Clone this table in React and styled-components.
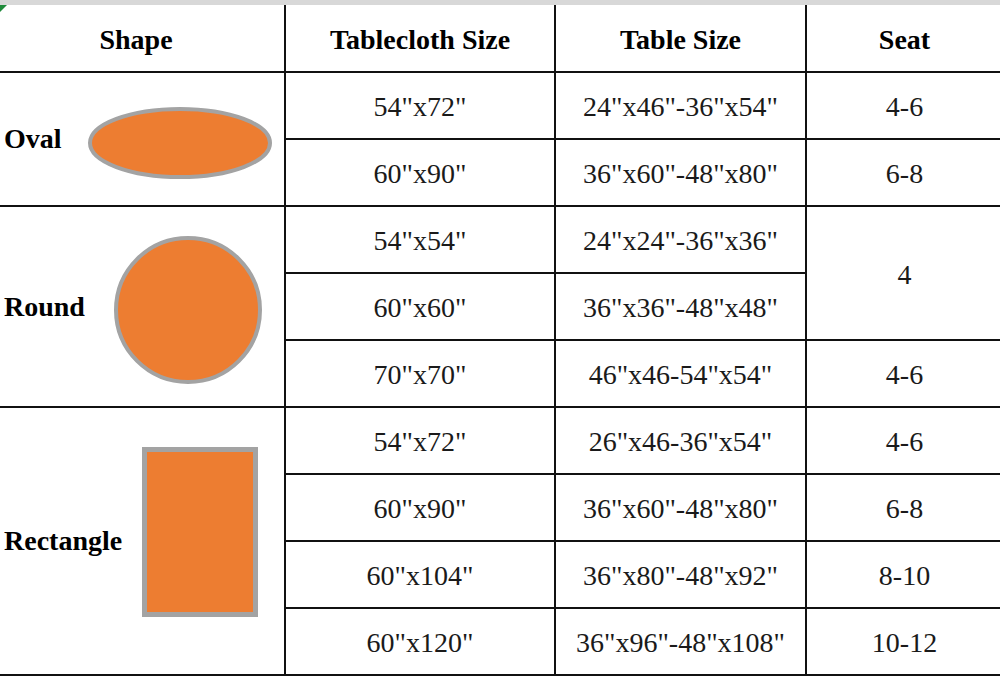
import React from 'react'
import styled, { createGlobalStyle } from 'styled-components'

const Global = createGlobalStyle`
    body {
        margin: 0;
        background: #fff;
    }
`

const Page = styled.div`
    position: relative;
    width: 1000px;
    height: 680px;
    overflow: hidden;
    background: #fff;
    font-family: "Liberation Serif", serif;
`

const Corner = styled.div`
    position: absolute;
    top: 5px;
    left: 0;
    width: 0;
    height: 0;
    border-top: 7px solid #1f8a3a;
    border-right: 7px solid transparent;
`

const Table = styled.table`
    width: 1002px;
    table-layout: fixed;
    border-collapse: collapse;
    border-top: 5px solid #d8d8d8;
`

const Head = styled.th`
    height: 63px;
    padding: 3px 0 0;
    font-family: "Liberation Serif", serif;
    font-size: 28px;
    font-weight: 700;
    color: #000;
    text-align: center;
    border-left: 2px solid #111;
    border-bottom: 2px solid #111;
    &:first-child {
        border-left: none;
        padding-right: 12px;
    }
`

const Cell = styled.td`
    height: 62px;
    padding: 3px 0 0;
    font-family: "Liberation Serif", serif;
    font-size: 28px;
    color: #1a1a1a;
    text-align: center;
    vertical-align: middle;
    border-left: 2px solid #111;
    border-bottom: 2px solid #111;
`

const ShapeCell = styled.td`
    padding: 0;
    border-bottom: 2px solid #111;
    vertical-align: middle;
`

const ShapeRow = styled.div`
    display: flex;
    align-items: center;
    padding-left: 4px;
`

const Label = styled.span`
    font-family: "Liberation Serif", serif;
    font-size: 28px;
    font-weight: 700;
    color: #000;
`

const Figure = styled.div`
    margin-left: auto;
    margin-right: ${p => p.$right}px;
    margin-top: ${p => p.$shift}px;
    line-height: 0;
`

const ORANGE = '#ed7d31'
const GREY = '#a3a3a3'

function Oval() {
    return (
        <svg width="186" height="74" viewBox="0 0 186 74">
            <ellipse cx="93" cy="37" rx="90" ry="34" fill={ORANGE} stroke={GREY} strokeWidth="4" />
        </svg>
    )
}

function Circle() {
    return (
        <svg width="150" height="150" viewBox="0 0 150 150">
            <circle cx="75" cy="75" r="72" fill={ORANGE} stroke={GREY} strokeWidth="4" />
        </svg>
    )
}

function Rect() {
    return (
        <svg width="116" height="170" viewBox="0 0 116 170">
            <rect x="2.5" y="2.5" width="111" height="165" fill={ORANGE} stroke={GREY} strokeWidth="5" />
        </svg>
    )
}

const groups = [
    {
        name: 'Oval', shape: <Oval />, right: 11, shift: 8,
        rows: [
            ['54"x72"', '24"x46"-36"x54"', '4-6'],
            ['60"x90"', '36"x60"-48"x80"', '6-8'],
        ],
    },
    {
        name: 'Round', shape: <Circle />, right: 21, shift: 6,
        rows: [
            ['54"x54"', '24"x24"-36"x36"', '4', 2],
            ['60"x60"', '36"x36"-48"x48"', null],
            ['70"x70"', '46"x46-54"x54"', '4-6'],
        ],
    },
    {
        name: 'Rectangle', shape: <Rect />, right: 26, shift: -18,
        rows: [
            ['54"x72"', '26"x46-36"x54"', '4-6'],
            ['60"x90"', '36"x60"-48"x80"', '6-8'],
            ['60"x104"', '36"x80"-48"x92"', '8-10'],
            ['60"x120"', '36"x96"-48"x108"', '10-12'],
        ],
    },
]

export default function App() {
    return (
        <Page>
            <Global />
            <Table>
                <colgroup>
                    <col style={{ width: 285 }} />
                    <col style={{ width: 270 }} />
                    <col style={{ width: 251 }} />
                    <col />
                </colgroup>
                <thead>
                    <tr>
                        <Head>Shape</Head>
                        <Head>Tablecloth Size</Head>
                        <Head>Table Size</Head>
                        <Head>Seat</Head>
                    </tr>
                </thead>
                <tbody>
                    {groups.map(g => g.rows.map((r, i) => (
                        <tr key={g.name + i}>
                            {i === 0 && (
                                <ShapeCell rowSpan={g.rows.length}>
                                    <ShapeRow>
                                        <Label>{g.name}</Label>
                                        <Figure $right={g.right} $shift={g.shift}>{g.shape}</Figure>
                                    </ShapeRow>
                                </ShapeCell>
                            )}
                            <Cell>{r[0]}</Cell>
                            <Cell>{r[1]}</Cell>
                            {r[2] !== null && <Cell rowSpan={r[3] || 1}>{r[2]}</Cell>}
                        </tr>
                    )))}
                </tbody>
            </Table>
            <Corner />
        </Page>
    )
}
